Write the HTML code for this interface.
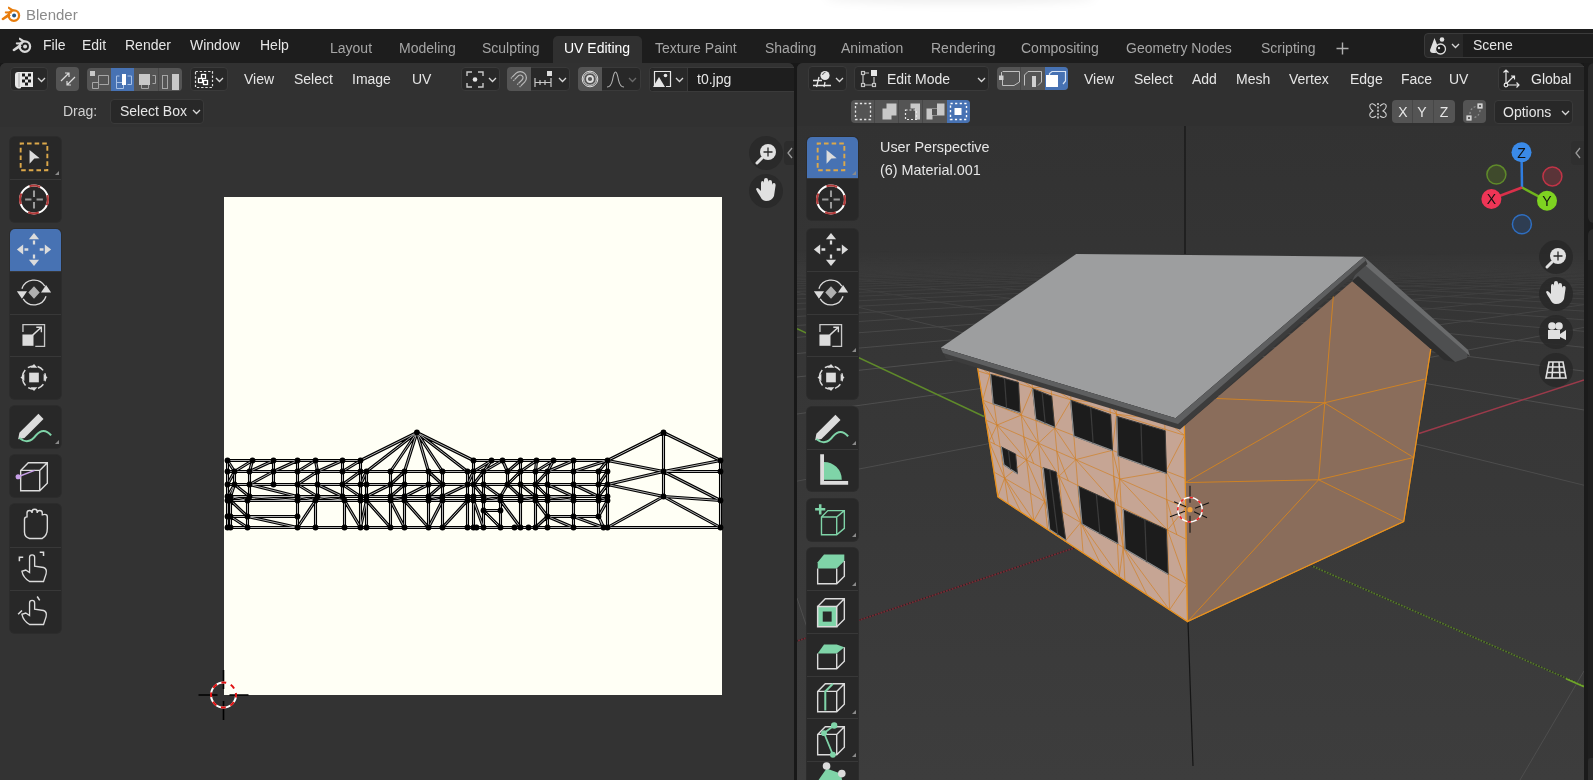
<!DOCTYPE html>
<html><head><meta charset="utf-8">
<style>
*{margin:0;padding:0;box-sizing:border-box}
html,body{width:1593px;height:780px;overflow:hidden;background:#181818;font-family:"Liberation Sans",sans-serif}
.a{position:absolute}
.t{position:absolute;white-space:nowrap;line-height:14px;font-size:14px;color:#e6e6e6;will-change:transform}
.tab{color:#a6a6a6}
.dd{position:absolute;background:#282828;border:1px solid #3a3a3a;border-radius:4px}
.tg{position:absolute;background:#545454;border-radius:4px}
svg{position:absolute;overflow:visible}
</style></head><body>
<!-- title bar -->
<div class="a" style="left:0;top:0;width:1593px;height:29px;background:#ffffff"></div>
<div class="a" style="left:825px;top:-8px;width:270px;height:12px;background:rgba(0,0,0,0.06);border-radius:50%;filter:blur(4px)"></div>
<div class="t" style="left:26px;top:7px;font-size:15px;line-height:15px;color:#8a8a8a">Blender</div>
<svg style="left:0px;top:1px" width="24" height="24" viewBox="0 0 24 24"><g fill="#e87d0d"><path d="M1.6 17.4 L8.6 12.2 L10.8 14.6 L3.2 19.2 Q1.4 19.4 1.6 17.4Z"/><path d="M5 10.4 L12 10.2 L11.6 12.6 L5.6 12.4 Q4.2 11.6 5 10.4Z"/><path d="M8.6 5.6 L14.6 9.2 L12.4 10.8 L8 7.4 Q7.8 5.8 8.6 5.6Z"/></g><circle cx="13.9" cy="14.6" r="5.2" fill="none" stroke="#e87d0d" stroke-width="2.3"/><circle cx="14.1" cy="14.5" r="2" fill="#265787"/></svg>
<!-- top bar -->
<div class="a" style="left:0;top:29px;width:1593px;height:34px;background:#1d1d1d"></div>
<svg style="left:10.5px;top:31.5px" width="24" height="24" viewBox="0 0 24 24"><g fill="#d9d9d9"><path d="M1.6 17.4 L8.6 12.2 L10.8 14.6 L3.2 19.2 Q1.4 19.4 1.6 17.4Z"/><path d="M5 10.4 L12 10.2 L11.6 12.6 L5.6 12.4 Q4.2 11.6 5 10.4Z"/><path d="M8.6 5.6 L14.6 9.2 L12.4 10.8 L8 7.4 Q7.8 5.8 8.6 5.6Z"/></g><circle cx="13.9" cy="14.6" r="5.2" fill="none" stroke="#d9d9d9" stroke-width="2.3"/><circle cx="14.1" cy="14.5" r="2" fill="#d9d9d9"/></svg>
<div class="t" style="left:43px;top:38px">File</div>
<div class="t" style="left:82px;top:38px">Edit</div>
<div class="t" style="left:125px;top:38px">Render</div>
<div class="t" style="left:190px;top:38px">Window</div>
<div class="t" style="left:260px;top:38px">Help</div>
<div class="a" style="left:553px;top:36px;width:89px;height:27px;background:#303030;border-radius:5px 5px 0 0"></div>
<div class="t tab" style="left:330px;top:41px">Layout</div>
<div class="t tab" style="left:399px;top:41px">Modeling</div>
<div class="t tab" style="left:482px;top:41px">Sculpting</div>
<div class="t" style="left:564px;top:41px;color:#ffffff">UV Editing</div>
<div class="t tab" style="left:655px;top:41px">Texture Paint</div>
<div class="t tab" style="left:765px;top:41px">Shading</div>
<div class="t tab" style="left:841px;top:41px">Animation</div>
<div class="t tab" style="left:931px;top:41px">Rendering</div>
<div class="t tab" style="left:1021px;top:41px">Compositing</div>
<div class="t tab" style="left:1126px;top:41px">Geometry Nodes</div>
<div class="t tab" style="left:1261px;top:41px">Scripting</div>
<svg style="left:1336px;top:42px" width="13" height="13"><path d="M6.5 0.5 V12.5 M0.5 6.5 H12.5" stroke="#b0b0b0" stroke-width="1.4"/></svg>

<div class="dd" style="left:1424px;top:33px;width:200px;height:25px;background:#282828"></div>
<div class="a" style="left:1463px;top:34px;width:140px;height:23px;background:#1d1d1d"></div>
<svg style="left:1429px;top:36px" width="22" height="20" viewBox="0 0 22 20"><path d="M5.5 2 L1 14 Q1 17 4 17 H7 Q6 13 9 11 Z" fill="#e0e0e0"/><circle cx="13" cy="3.5" r="2.3" fill="#e0e0e0"/><circle cx="11.5" cy="13" r="5" fill="#1d1d1d" stroke="#e0e0e0" stroke-width="1.3"/><circle cx="10" cy="12" r="1.2" fill="#e0e0e0"/></svg>
<svg style="left:1451px;top:43px" width="9" height="6"><path d="M1 1 L4.5 4.5 L8 1" fill="none" stroke="#d8d8d8" stroke-width="1.3"/></svg>
<div class="t" style="left:1473px;top:38px">Scene</div>

<!-- LEFT EDITOR: UV -->
<div class="a" style="left:0;top:63px;width:794px;height:717px;background:#333333;border-radius:6px 6px 0 0"></div>
<div class="a" style="left:0;top:63px;width:794px;height:64px;background:#313131;border-radius:6px 6px 0 0"></div>

<!-- UV header row1 -->
<div class="dd" style="left:10px;top:67px;width:38px;height:24px"></div>
<svg style="left:14px;top:70px" width="20" height="20" viewBox="0 0 20 20">
 <path d="M4 2 H19 V17 H7 V18 Q5 19 3 18 Q1 17 1 15 V5 Q1 2 4 2Z" fill="#e8e8e8"/>
 <path d="M5 3 V17" stroke="#9a9a9a" stroke-width="0.8"/>
 <g fill="#1a1a1a"><rect x="8" y="3.5" width="3" height="3"/><rect x="14" y="3.5" width="3" height="3"/><rect x="11" y="6.5" width="3" height="3"/><rect x="8" y="9.5" width="3" height="3"/><rect x="14" y="9.5" width="3" height="3"/><rect x="11" y="12.5" width="3" height="3"/></g>
</svg>
<svg style="left:37px;top:77px" width="9" height="6"><path d="M1 1 L4.5 4.5 L8 1" fill="none" stroke="#d8d8d8" stroke-width="1.3"/></svg>
<div class="tg" style="left:56px;top:67px;width:23px;height:24px"></div>
<svg style="left:58px;top:70px" width="20" height="18"><g fill="none" stroke="#dcdcdc" stroke-width="1.2"><path d="M3 11 L11 3 M7 3 H11 V7"/><path d="M17 7 L9 15 M13 15 H9 V11"/></g></svg>
<div class="a" style="left:87px;top:68px;width:95px;height:23px;border-radius:4px;overflow:hidden;background:#545454">
 <div class="a" style="left:24px;top:0;width:23px;height:23px;background:#4772b3"></div>
 <div class="a" style="left:71px;top:0;width:1px;height:23px;background:#474747"></div>
</div>
<svg style="left:89px;top:70px" width="92" height="19">
 <g fill="none" stroke="#a6a6a6" stroke-width="1"><path d="M9.5 5.5 H19.5 V14.5 H10.5 M9.5 5.5 V18.5 H3.5 V12.5 H9.5"/></g>
 <rect x="1" y="1" width="5" height="5" fill="#c8c8c8"/>
 <g fill="none" stroke="#a9c1e6" stroke-width="1"><path d="M30.5 6 H27.5 V18.5 H34.5 V15 M38.5 6 H42.5 V14.5 H38.5 M27.5 12.5 H33"/></g>
 <rect x="33" y="4" width="4" height="11" fill="#ffffff"/>
 <rect x="50" y="4" width="11" height="11" fill="#c8c8c8"/>
 <g fill="none" stroke="#a6a6a6" stroke-width="1"><path d="M63.5 5.5 H66.5 V13.5 H63.5 M52.5 15 V18.5 H59.5 V15"/><rect x="73.5" y="5.5" width="5" height="13"/></g>
 <rect x="83" y="4" width="7" height="16" fill="#c8c8c8"/>
</svg>
<div class="dd" style="left:190px;top:67px;width:38px;height:24px"></div>
<svg style="left:194px;top:70px" width="20" height="20"><rect x="1.5" y="1.5" width="17" height="16" fill="none" stroke="#dcdcdc" stroke-width="1.2" stroke-dasharray="2.4 1.8"/><g fill="#1e1e1e" stroke="#ffffff" stroke-width="1.3"><rect x="7.5" y="4.5" width="4" height="4"/><rect x="4.5" y="8.5" width="4" height="4"/><rect x="9.5" y="10.5" width="4" height="4"/></g></svg>
<svg style="left:215px;top:77px" width="9" height="6"><path d="M1 1 L4.5 4.5 L8 1" fill="none" stroke="#d8d8d8" stroke-width="1.3"/></svg>
<div class="t" style="left:244px;top:72px">View</div>
<div class="t" style="left:294px;top:72px">Select</div>
<div class="t" style="left:352px;top:72px">Image</div>
<div class="t" style="left:412px;top:72px">UV</div>
<div class="dd" style="left:461px;top:67px;width:39px;height:24px"></div>
<svg style="left:465px;top:70px" width="20" height="20"><g fill="none" stroke="#c8c8c8" stroke-width="1.4"><path d="M2 6 V2 H7 M13 2 H18 V6 M18 13 V17 H13 M7 17 H2 V13"/></g><circle cx="10" cy="9.5" r="2.3" fill="#e6e6e6"/></svg>
<svg style="left:488px;top:77px" width="9" height="6"><path d="M1 1 L4.5 4.5 L8 1" fill="none" stroke="#d8d8d8" stroke-width="1.3"/></svg>
<div class="dd" style="left:507px;top:67px;width:63px;height:24px"></div>
<div class="a" style="left:507px;top:67px;width:24px;height:24px;background:#545454;border-radius:4px 0 0 4px"></div>
<svg style="left:507px;top:67px" width="24" height="24" viewBox="-12 -12 24 24"><g transform="translate(0.5 -0.5) rotate(45)"><path d="M-4.5 6 V-1 A4.5 4.5 0 0 1 4.5 -1 V6" fill="none" stroke="#b8b8b8" stroke-width="4.6"/><path d="M-4.5 6.5 V-1 A4.5 4.5 0 0 1 4.5 -1 V6.5" fill="none" stroke="#545454" stroke-width="2.2"/><path d="M-7 4.5 H-2 M2 4.5 H7" stroke="#545454" stroke-width="0.8"/></g></svg>
<svg style="left:533px;top:70px" width="22" height="20"><rect x="14" y="1" width="5" height="5" fill="#dcdcdc"/><g fill="none" stroke="#c8c8c8" stroke-width="1.2"><path d="M2 8 V17 M18 8 V17 M2 12.5 H18 M7 10 V15 M12 10 V15"/></g></svg>
<svg style="left:558px;top:77px" width="9" height="6"><path d="M1 1 L4.5 4.5 L8 1" fill="none" stroke="#d8d8d8" stroke-width="1.3"/></svg>
<div class="dd" style="left:578px;top:67px;width:63px;height:24px"></div>
<div class="a" style="left:578px;top:67px;width:24px;height:24px;background:#545454;border-radius:4px 0 0 4px"></div>
<svg style="left:580px;top:69px" width="20" height="20"><g fill="none" stroke="#dcdcdc" stroke-width="1"><circle cx="10" cy="10" r="7.8"/><circle cx="10" cy="10" r="6.3"/></g><circle cx="10" cy="10" r="3" fill="none" stroke="#dcdcdc" stroke-width="1.8"/></svg>
<svg style="left:605px;top:70px" width="20" height="20"><path d="M2 17 Q6 17 7.5 10 Q9 2 10.5 2 Q12 2 13.5 10 Q15 17 19 17" fill="none" stroke="#b4b4b4" stroke-width="1.1"/></svg>
<svg style="left:628px;top:77px" width="9" height="6"><path d="M1 1 L4.5 4.5 L8 1" fill="none" stroke="#6a6a6a" stroke-width="1.3"/></svg>
<div class="dd" style="left:649px;top:67px;width:145px;height:25px;background:#1e1e1e;border-right:none;border-radius:4px 0 0 4px"></div>
<div class="a" style="left:650px;top:68px;width:38px;height:23px;background:#282828;border-right:1px solid #3a3a3a;border-radius:4px 0 0 4px"></div>
<svg style="left:653px;top:70px" width="20" height="19"><path d="M1.5 16.5 V1.5 H17.5 V16.5 H13" fill="none" stroke="#e6e6e6" stroke-width="1.2"/><path d="M0 17 L6 7 L12 17Z" fill="#e6e6e6"/><circle cx="12.5" cy="5.5" r="1.8" fill="#e6e6e6"/></svg>
<svg style="left:675px;top:77px" width="9" height="6"><path d="M1 1 L4.5 4.5 L8 1" fill="none" stroke="#d8d8d8" stroke-width="1.3"/></svg>
<div class="t" style="left:697px;top:72px">t0.jpg</div>
<!-- UV row2 -->
<div class="t" style="left:63px;top:104px;color:#d0d0d0">Drag:</div>
<div class="dd" style="left:110px;top:99px;width:94px;height:25px"></div>
<div class="t" style="left:120px;top:104px">Select Box</div>
<svg style="left:192px;top:109px" width="9" height="6"><path d="M1 1 L4.5 4.5 L8 1" fill="none" stroke="#d8d8d8" stroke-width="1.3"/></svg>
<!--UVHEADER-->
<div class="a" style="left:224px;top:197px;width:498px;height:498px;background:#fffff5"></div>
<svg style="left:0;top:0" width="1593" height="780"><path d="M227.5 460.5L252.5 460.5M252.5 460.5L273.5 460.5M273.5 460.5L297.5 460.5M297.5 460.5L315.5 460.5M315.5 460.5L342.5 460.5M342.5 460.5L360.5 460.5M473.5 460.5L491.5 460.5M491.5 460.5L502.5 460.5M502.5 460.5L520.5 460.5M520.5 460.5L536.5 460.5M536.5 460.5L553.5 460.5M553.5 460.5L573.5 460.5M573.5 460.5L607.5 460.5M227.5 471.5L234.5 471.5M234.5 471.5L249.5 471.5M249.5 471.5L273.5 471.5M273.5 471.5L297.5 471.5M297.5 471.5L317.5 471.5M317.5 471.5L342.5 471.5M342.5 471.5L360.5 471.5M360.5 471.5L366.5 471.5M366.5 471.5L390.5 471.5M390.5 471.5L404.5 471.5M404.5 471.5L428.5 471.5M428.5 471.5L442.5 471.5M442.5 471.5L467.5 471.5M467.5 471.5L473.5 471.5M473.5 471.5L483.5 471.5M483.5 471.5L507.5 471.5M507.5 471.5L520.5 471.5M520.5 471.5L535.5 471.5M535.5 471.5L547.5 471.5M547.5 471.5L573.5 471.5M573.5 471.5L598.5 471.5M598.5 471.5L607.5 471.5M227.5 484.5L234.5 484.5M234.5 484.5L249.5 484.5M249.5 484.5L273.5 484.5M273.5 484.5L297.5 484.5M297.5 484.5L317.5 484.5M317.5 484.5L342.5 484.5M342.5 484.5L360.5 484.5M360.5 484.5L366.5 484.5M366.5 484.5L390.5 484.5M390.5 484.5L404.5 484.5M404.5 484.5L428.5 484.5M428.5 484.5L442.5 484.5M442.5 484.5L467.5 484.5M467.5 484.5L473.5 484.5M473.5 484.5L483.5 484.5M483.5 484.5L507.5 484.5M507.5 484.5L520.5 484.5M520.5 484.5L535.5 484.5M535.5 484.5L547.5 484.5M547.5 484.5L573.5 484.5M573.5 484.5L598.5 484.5M598.5 484.5L607.5 484.5M227.5 496.5L230.5 496.5M230.5 496.5L249.5 496.5M249.5 496.5L297.5 496.5M297.5 496.5L317.5 496.5M317.5 496.5L342.5 496.5M342.5 496.5L360.5 496.5M360.5 496.5L366.5 496.5M366.5 496.5L390.5 496.5M390.5 496.5L404.5 496.5M404.5 496.5L428.5 496.5M428.5 496.5L442.5 496.5M442.5 496.5L467.5 496.5M467.5 496.5L473.5 496.5M473.5 496.5L483.5 496.5M483.5 496.5L500.5 496.5M500.5 496.5L520.5 496.5M520.5 496.5L535.5 496.5M535.5 496.5L547.5 496.5M547.5 496.5L573.5 496.5M573.5 496.5L598.5 496.5M598.5 496.5L607.5 496.5M227.5 500.5L230.5 500.5M230.5 500.5L247.5 500.5M247.5 500.5L297.5 500.5M297.5 500.5L315.5 500.5M315.5 500.5L344.5 500.5M344.5 500.5L360.5 500.5M360.5 500.5L366.5 500.5M366.5 500.5L390.5 500.5M390.5 500.5L404.5 500.5M404.5 500.5L428.5 500.5M428.5 500.5L442.5 500.5M442.5 500.5L467.5 500.5M467.5 500.5L473.5 500.5M473.5 500.5L483.5 500.5M483.5 500.5L500.5 500.5M500.5 500.5L520.5 500.5M520.5 500.5L535.5 500.5M535.5 500.5L547.5 500.5M547.5 500.5L573.5 500.5M573.5 500.5L598.5 500.5M598.5 500.5L607.5 500.5M227.5 516.5L230.5 516.5M230.5 516.5L247.5 516.5M247.5 516.5L297.5 516.5M483.5 510.5L500.5 510.5M547.5 516.5L573.5 516.5M573.5 516.5L598.5 516.5M227.5 527.5L230.5 527.5M230.5 527.5L247.5 527.5M247.5 527.5L297.5 527.5M297.5 527.5L315.5 527.5M315.5 527.5L344.5 527.5M344.5 527.5L360.5 527.5M360.5 527.5L366.5 527.5M366.5 527.5L390.5 527.5M390.5 527.5L404.5 527.5M404.5 527.5L428.5 527.5M428.5 527.5L442.5 527.5M442.5 527.5L467.5 527.5M467.5 527.5L473.5 527.5M473.5 527.5L476.5 527.5M476.5 527.5L483.5 527.5M483.5 527.5L500.5 527.5M500.5 527.5L514.5 527.5M514.5 527.5L520.5 527.5M520.5 527.5L528.5 527.5M528.5 527.5L535.5 527.5M535.5 527.5L547.5 527.5M547.5 527.5L573.5 527.5M573.5 527.5L603.5 527.5M603.5 527.5L607.5 527.5M227.5 460.5L227.5 471.5M227.5 471.5L227.5 484.5M227.5 484.5L227.5 496.5M227.5 496.5L227.5 500.5M227.5 500.5L227.5 516.5M227.5 516.5L227.5 527.5M230.5 496.5L230.5 500.5M230.5 500.5L230.5 516.5M230.5 516.5L230.5 527.5M234.5 471.5L234.5 484.5M249.5 471.5L249.5 484.5M249.5 484.5L249.5 496.5M247.5 500.5L247.5 516.5M247.5 516.5L247.5 527.5M273.5 460.5L273.5 471.5M273.5 471.5L273.5 484.5M297.5 460.5L297.5 471.5M297.5 471.5L297.5 484.5M297.5 484.5L297.5 496.5M297.5 496.5L297.5 500.5M297.5 500.5L297.5 516.5M297.5 516.5L297.5 527.5M317.5 471.5L317.5 484.5M317.5 484.5L317.5 496.5M315.5 500.5L315.5 527.5M342.5 460.5L342.5 471.5M342.5 471.5L342.5 484.5M342.5 484.5L342.5 496.5M344.5 500.5L344.5 527.5M360.5 460.5L360.5 471.5M360.5 471.5L360.5 484.5M360.5 484.5L360.5 496.5M360.5 496.5L360.5 500.5M360.5 500.5L360.5 527.5M366.5 471.5L366.5 484.5M366.5 484.5L366.5 496.5M366.5 496.5L366.5 500.5M366.5 500.5L366.5 527.5M390.5 471.5L390.5 484.5M390.5 484.5L390.5 496.5M390.5 496.5L390.5 500.5M390.5 500.5L390.5 527.5M404.5 471.5L404.5 484.5M404.5 484.5L404.5 496.5M404.5 496.5L404.5 500.5M404.5 500.5L404.5 527.5M428.5 471.5L428.5 484.5M428.5 484.5L428.5 496.5M428.5 496.5L428.5 500.5M428.5 500.5L428.5 527.5M442.5 471.5L442.5 484.5M442.5 484.5L442.5 496.5M442.5 496.5L442.5 500.5M442.5 500.5L442.5 527.5M467.5 471.5L467.5 484.5M467.5 484.5L467.5 496.5M467.5 496.5L467.5 500.5M467.5 500.5L467.5 527.5M473.5 460.5L473.5 471.5M473.5 471.5L473.5 484.5M473.5 484.5L473.5 496.5M473.5 496.5L473.5 500.5M473.5 500.5L473.5 527.5M483.5 471.5L483.5 484.5M483.5 484.5L483.5 496.5M483.5 496.5L483.5 500.5M483.5 500.5L483.5 510.5M483.5 510.5L483.5 527.5M500.5 496.5L500.5 500.5M500.5 500.5L500.5 510.5M500.5 510.5L500.5 527.5M507.5 471.5L507.5 484.5M520.5 460.5L520.5 471.5M520.5 471.5L520.5 484.5M520.5 484.5L520.5 496.5M520.5 496.5L520.5 500.5M520.5 500.5L520.5 527.5M535.5 471.5L535.5 484.5M535.5 484.5L535.5 496.5M535.5 496.5L535.5 500.5M535.5 500.5L535.5 527.5M547.5 471.5L547.5 484.5M547.5 484.5L547.5 496.5M547.5 496.5L547.5 500.5M547.5 500.5L547.5 516.5M547.5 516.5L547.5 527.5M573.5 460.5L573.5 471.5M573.5 471.5L573.5 484.5M573.5 484.5L573.5 496.5M573.5 496.5L573.5 500.5M573.5 500.5L573.5 516.5M573.5 516.5L573.5 527.5M598.5 471.5L598.5 484.5M598.5 484.5L598.5 496.5M598.5 496.5L598.5 500.5M598.5 500.5L598.5 516.5M607.5 460.5L607.5 471.5M607.5 471.5L607.5 484.5M607.5 484.5L607.5 496.5M607.5 496.5L607.5 500.5M607.5 500.5L607.5 527.5M598.5 516.5L603.5 527.5M227.5 460.5L234.5 471.5M234.5 471.5L252.5 460.5M249.5 471.5L252.5 460.5M249.5 471.5L273.5 460.5M273.5 471.5L297.5 460.5M227.5 484.5L234.5 471.5M249.5 484.5L273.5 471.5M234.5 484.5L227.5 496.5M234.5 484.5L230.5 496.5M234.5 484.5L249.5 496.5M249.5 484.5L297.5 496.5M230.5 500.5L247.5 516.5M230.5 516.5L247.5 527.5M247.5 516.5L297.5 527.5M297.5 471.5L315.5 460.5M315.5 460.5L317.5 471.5M317.5 471.5L342.5 460.5M342.5 471.5L360.5 460.5M297.5 484.5L317.5 471.5M342.5 484.5L360.5 471.5M297.5 484.5L317.5 496.5M317.5 484.5L342.5 496.5M342.5 484.5L360.5 496.5M360.5 484.5L366.5 471.5M297.5 527.5L315.5 500.5M344.5 500.5L360.5 527.5M360.5 527.5L366.5 500.5M390.5 484.5L404.5 471.5M428.5 471.5L442.5 484.5M366.5 496.5L390.5 484.5M390.5 496.5L404.5 484.5M404.5 496.5L428.5 484.5M428.5 496.5L442.5 484.5M366.5 500.5L390.5 527.5M390.5 500.5L404.5 527.5M404.5 500.5L428.5 527.5M428.5 527.5L442.5 500.5M473.5 471.5L491.5 460.5M483.5 471.5L491.5 460.5M483.5 471.5L502.5 460.5M502.5 460.5L507.5 471.5M467.5 484.5L473.5 471.5M473.5 484.5L483.5 471.5M442.5 496.5L467.5 484.5M473.5 484.5L483.5 496.5M483.5 484.5L500.5 496.5M500.5 496.5L507.5 484.5M442.5 527.5L467.5 500.5M473.5 500.5L483.5 527.5M483.5 510.5L500.5 527.5M500.5 500.5L520.5 527.5M507.5 471.5L520.5 460.5M520.5 471.5L536.5 460.5M535.5 471.5L553.5 460.5M547.5 471.5L553.5 460.5M547.5 471.5L573.5 460.5M507.5 484.5L520.5 471.5M535.5 484.5L547.5 471.5M507.5 484.5L520.5 496.5M520.5 484.5L535.5 496.5M535.5 484.5L547.5 496.5M547.5 484.5L573.5 496.5M535.5 500.5L547.5 516.5M547.5 516.5L535.5 527.5M547.5 516.5L573.5 527.5M573.5 471.5L607.5 460.5M598.5 471.5L607.5 460.5M598.5 484.5L607.5 471.5M573.5 484.5L598.5 496.5M598.5 496.5L607.5 484.5M598.5 516.5L607.5 500.5M573.5 516.5L603.5 527.5M598.5 516.5L603.5 527.5M536.5 460.5L535.5 471.5M230.5 496.5L247.5 500.5M249.5 496.5L297.5 500.5M297.5 496.5L315.5 500.5M317.5 496.5L344.5 500.5M360.5 496.5L366.5 500.5M390.5 496.5L404.5 500.5M428.5 496.5L442.5 500.5M467.5 496.5L473.5 500.5M483.5 496.5L500.5 500.5M520.5 496.5L535.5 500.5M547.5 496.5L573.5 500.5M598.5 496.5L607.5 500.5M416.9 432.5L360.5 460.5M416.9 432.5L366.5 471.5M416.9 432.5L390.5 471.5M416.9 432.5L404.5 471.5M416.9 432.5L428.5 471.5M416.9 432.5L442.5 471.5M416.9 432.5L467.5 471.5M416.9 432.5L473.5 460.5M607.5 460.5L663.5 432.5M663.5 432.5L720.5 460.5M663.5 432.5L663.5 471.5M663.5 471.5L663.5 496.5M607.5 460.5L663.5 471.5M663.5 471.5L720.5 460.5M607.5 484.5L663.5 471.5M607.5 484.5L663.5 496.5M663.5 471.5L720.5 471.5M663.5 471.5L720.5 500.5M663.5 496.5L720.5 500.5M607.5 527.5L663.5 496.5M663.5 496.5L720.5 527.5M607.5 527.5L720.5 527.5M720.5 460.5L720.5 527.5" stroke="#000" stroke-width="3.1" fill="none"/><path d="M227.5 460.5L252.5 460.5M252.5 460.5L273.5 460.5M273.5 460.5L297.5 460.5M297.5 460.5L315.5 460.5M315.5 460.5L342.5 460.5M342.5 460.5L360.5 460.5M473.5 460.5L491.5 460.5M491.5 460.5L502.5 460.5M502.5 460.5L520.5 460.5M520.5 460.5L536.5 460.5M536.5 460.5L553.5 460.5M553.5 460.5L573.5 460.5M573.5 460.5L607.5 460.5M227.5 471.5L234.5 471.5M234.5 471.5L249.5 471.5M249.5 471.5L273.5 471.5M273.5 471.5L297.5 471.5M297.5 471.5L317.5 471.5M317.5 471.5L342.5 471.5M342.5 471.5L360.5 471.5M360.5 471.5L366.5 471.5M366.5 471.5L390.5 471.5M390.5 471.5L404.5 471.5M404.5 471.5L428.5 471.5M428.5 471.5L442.5 471.5M442.5 471.5L467.5 471.5M467.5 471.5L473.5 471.5M473.5 471.5L483.5 471.5M483.5 471.5L507.5 471.5M507.5 471.5L520.5 471.5M520.5 471.5L535.5 471.5M535.5 471.5L547.5 471.5M547.5 471.5L573.5 471.5M573.5 471.5L598.5 471.5M598.5 471.5L607.5 471.5M227.5 484.5L234.5 484.5M234.5 484.5L249.5 484.5M249.5 484.5L273.5 484.5M273.5 484.5L297.5 484.5M297.5 484.5L317.5 484.5M317.5 484.5L342.5 484.5M342.5 484.5L360.5 484.5M360.5 484.5L366.5 484.5M366.5 484.5L390.5 484.5M390.5 484.5L404.5 484.5M404.5 484.5L428.5 484.5M428.5 484.5L442.5 484.5M442.5 484.5L467.5 484.5M467.5 484.5L473.5 484.5M473.5 484.5L483.5 484.5M483.5 484.5L507.5 484.5M507.5 484.5L520.5 484.5M520.5 484.5L535.5 484.5M535.5 484.5L547.5 484.5M547.5 484.5L573.5 484.5M573.5 484.5L598.5 484.5M598.5 484.5L607.5 484.5M227.5 496.5L230.5 496.5M230.5 496.5L249.5 496.5M249.5 496.5L297.5 496.5M297.5 496.5L317.5 496.5M317.5 496.5L342.5 496.5M342.5 496.5L360.5 496.5M360.5 496.5L366.5 496.5M366.5 496.5L390.5 496.5M390.5 496.5L404.5 496.5M404.5 496.5L428.5 496.5M428.5 496.5L442.5 496.5M442.5 496.5L467.5 496.5M467.5 496.5L473.5 496.5M473.5 496.5L483.5 496.5M483.5 496.5L500.5 496.5M500.5 496.5L520.5 496.5M520.5 496.5L535.5 496.5M535.5 496.5L547.5 496.5M547.5 496.5L573.5 496.5M573.5 496.5L598.5 496.5M598.5 496.5L607.5 496.5M227.5 500.5L230.5 500.5M230.5 500.5L247.5 500.5M247.5 500.5L297.5 500.5M297.5 500.5L315.5 500.5M315.5 500.5L344.5 500.5M344.5 500.5L360.5 500.5M360.5 500.5L366.5 500.5M366.5 500.5L390.5 500.5M390.5 500.5L404.5 500.5M404.5 500.5L428.5 500.5M428.5 500.5L442.5 500.5M442.5 500.5L467.5 500.5M467.5 500.5L473.5 500.5M473.5 500.5L483.5 500.5M483.5 500.5L500.5 500.5M500.5 500.5L520.5 500.5M520.5 500.5L535.5 500.5M535.5 500.5L547.5 500.5M547.5 500.5L573.5 500.5M573.5 500.5L598.5 500.5M598.5 500.5L607.5 500.5M227.5 516.5L230.5 516.5M230.5 516.5L247.5 516.5M247.5 516.5L297.5 516.5M483.5 510.5L500.5 510.5M547.5 516.5L573.5 516.5M573.5 516.5L598.5 516.5M227.5 527.5L230.5 527.5M230.5 527.5L247.5 527.5M247.5 527.5L297.5 527.5M297.5 527.5L315.5 527.5M315.5 527.5L344.5 527.5M344.5 527.5L360.5 527.5M360.5 527.5L366.5 527.5M366.5 527.5L390.5 527.5M390.5 527.5L404.5 527.5M404.5 527.5L428.5 527.5M428.5 527.5L442.5 527.5M442.5 527.5L467.5 527.5M467.5 527.5L473.5 527.5M473.5 527.5L476.5 527.5M476.5 527.5L483.5 527.5M483.5 527.5L500.5 527.5M500.5 527.5L514.5 527.5M514.5 527.5L520.5 527.5M520.5 527.5L528.5 527.5M528.5 527.5L535.5 527.5M535.5 527.5L547.5 527.5M547.5 527.5L573.5 527.5M573.5 527.5L603.5 527.5M603.5 527.5L607.5 527.5M227.5 460.5L227.5 471.5M227.5 471.5L227.5 484.5M227.5 484.5L227.5 496.5M227.5 496.5L227.5 500.5M227.5 500.5L227.5 516.5M227.5 516.5L227.5 527.5M230.5 496.5L230.5 500.5M230.5 500.5L230.5 516.5M230.5 516.5L230.5 527.5M234.5 471.5L234.5 484.5M249.5 471.5L249.5 484.5M249.5 484.5L249.5 496.5M247.5 500.5L247.5 516.5M247.5 516.5L247.5 527.5M273.5 460.5L273.5 471.5M273.5 471.5L273.5 484.5M297.5 460.5L297.5 471.5M297.5 471.5L297.5 484.5M297.5 484.5L297.5 496.5M297.5 496.5L297.5 500.5M297.5 500.5L297.5 516.5M297.5 516.5L297.5 527.5M317.5 471.5L317.5 484.5M317.5 484.5L317.5 496.5M315.5 500.5L315.5 527.5M342.5 460.5L342.5 471.5M342.5 471.5L342.5 484.5M342.5 484.5L342.5 496.5M344.5 500.5L344.5 527.5M360.5 460.5L360.5 471.5M360.5 471.5L360.5 484.5M360.5 484.5L360.5 496.5M360.5 496.5L360.5 500.5M360.5 500.5L360.5 527.5M366.5 471.5L366.5 484.5M366.5 484.5L366.5 496.5M366.5 496.5L366.5 500.5M366.5 500.5L366.5 527.5M390.5 471.5L390.5 484.5M390.5 484.5L390.5 496.5M390.5 496.5L390.5 500.5M390.5 500.5L390.5 527.5M404.5 471.5L404.5 484.5M404.5 484.5L404.5 496.5M404.5 496.5L404.5 500.5M404.5 500.5L404.5 527.5M428.5 471.5L428.5 484.5M428.5 484.5L428.5 496.5M428.5 496.5L428.5 500.5M428.5 500.5L428.5 527.5M442.5 471.5L442.5 484.5M442.5 484.5L442.5 496.5M442.5 496.5L442.5 500.5M442.5 500.5L442.5 527.5M467.5 471.5L467.5 484.5M467.5 484.5L467.5 496.5M467.5 496.5L467.5 500.5M467.5 500.5L467.5 527.5M473.5 460.5L473.5 471.5M473.5 471.5L473.5 484.5M473.5 484.5L473.5 496.5M473.5 496.5L473.5 500.5M473.5 500.5L473.5 527.5M483.5 471.5L483.5 484.5M483.5 484.5L483.5 496.5M483.5 496.5L483.5 500.5M483.5 500.5L483.5 510.5M483.5 510.5L483.5 527.5M500.5 496.5L500.5 500.5M500.5 500.5L500.5 510.5M500.5 510.5L500.5 527.5M507.5 471.5L507.5 484.5M520.5 460.5L520.5 471.5M520.5 471.5L520.5 484.5M520.5 484.5L520.5 496.5M520.5 496.5L520.5 500.5M520.5 500.5L520.5 527.5M535.5 471.5L535.5 484.5M535.5 484.5L535.5 496.5M535.5 496.5L535.5 500.5M535.5 500.5L535.5 527.5M547.5 471.5L547.5 484.5M547.5 484.5L547.5 496.5M547.5 496.5L547.5 500.5M547.5 500.5L547.5 516.5M547.5 516.5L547.5 527.5M573.5 460.5L573.5 471.5M573.5 471.5L573.5 484.5M573.5 484.5L573.5 496.5M573.5 496.5L573.5 500.5M573.5 500.5L573.5 516.5M573.5 516.5L573.5 527.5M598.5 471.5L598.5 484.5M598.5 484.5L598.5 496.5M598.5 496.5L598.5 500.5M598.5 500.5L598.5 516.5M607.5 460.5L607.5 471.5M607.5 471.5L607.5 484.5M607.5 484.5L607.5 496.5M607.5 496.5L607.5 500.5M607.5 500.5L607.5 527.5M598.5 516.5L603.5 527.5M227.5 460.5L234.5 471.5M234.5 471.5L252.5 460.5M249.5 471.5L252.5 460.5M249.5 471.5L273.5 460.5M273.5 471.5L297.5 460.5M227.5 484.5L234.5 471.5M249.5 484.5L273.5 471.5M234.5 484.5L227.5 496.5M234.5 484.5L230.5 496.5M234.5 484.5L249.5 496.5M249.5 484.5L297.5 496.5M230.5 500.5L247.5 516.5M230.5 516.5L247.5 527.5M247.5 516.5L297.5 527.5M297.5 471.5L315.5 460.5M315.5 460.5L317.5 471.5M317.5 471.5L342.5 460.5M342.5 471.5L360.5 460.5M297.5 484.5L317.5 471.5M342.5 484.5L360.5 471.5M297.5 484.5L317.5 496.5M317.5 484.5L342.5 496.5M342.5 484.5L360.5 496.5M360.5 484.5L366.5 471.5M297.5 527.5L315.5 500.5M344.5 500.5L360.5 527.5M360.5 527.5L366.5 500.5M390.5 484.5L404.5 471.5M428.5 471.5L442.5 484.5M366.5 496.5L390.5 484.5M390.5 496.5L404.5 484.5M404.5 496.5L428.5 484.5M428.5 496.5L442.5 484.5M366.5 500.5L390.5 527.5M390.5 500.5L404.5 527.5M404.5 500.5L428.5 527.5M428.5 527.5L442.5 500.5M473.5 471.5L491.5 460.5M483.5 471.5L491.5 460.5M483.5 471.5L502.5 460.5M502.5 460.5L507.5 471.5M467.5 484.5L473.5 471.5M473.5 484.5L483.5 471.5M442.5 496.5L467.5 484.5M473.5 484.5L483.5 496.5M483.5 484.5L500.5 496.5M500.5 496.5L507.5 484.5M442.5 527.5L467.5 500.5M473.5 500.5L483.5 527.5M483.5 510.5L500.5 527.5M500.5 500.5L520.5 527.5M507.5 471.5L520.5 460.5M520.5 471.5L536.5 460.5M535.5 471.5L553.5 460.5M547.5 471.5L553.5 460.5M547.5 471.5L573.5 460.5M507.5 484.5L520.5 471.5M535.5 484.5L547.5 471.5M507.5 484.5L520.5 496.5M520.5 484.5L535.5 496.5M535.5 484.5L547.5 496.5M547.5 484.5L573.5 496.5M535.5 500.5L547.5 516.5M547.5 516.5L535.5 527.5M547.5 516.5L573.5 527.5M573.5 471.5L607.5 460.5M598.5 471.5L607.5 460.5M598.5 484.5L607.5 471.5M573.5 484.5L598.5 496.5M598.5 496.5L607.5 484.5M598.5 516.5L607.5 500.5M573.5 516.5L603.5 527.5M598.5 516.5L603.5 527.5M536.5 460.5L535.5 471.5M230.5 496.5L247.5 500.5M249.5 496.5L297.5 500.5M297.5 496.5L315.5 500.5M317.5 496.5L344.5 500.5M360.5 496.5L366.5 500.5M390.5 496.5L404.5 500.5M428.5 496.5L442.5 500.5M467.5 496.5L473.5 500.5M483.5 496.5L500.5 500.5M520.5 496.5L535.5 500.5M547.5 496.5L573.5 500.5M598.5 496.5L607.5 500.5M416.9 432.5L360.5 460.5M416.9 432.5L366.5 471.5M416.9 432.5L390.5 471.5M416.9 432.5L404.5 471.5M416.9 432.5L428.5 471.5M416.9 432.5L442.5 471.5M416.9 432.5L467.5 471.5M416.9 432.5L473.5 460.5M607.5 460.5L663.5 432.5M663.5 432.5L720.5 460.5M663.5 432.5L663.5 471.5M663.5 471.5L663.5 496.5M607.5 460.5L663.5 471.5M663.5 471.5L720.5 460.5M607.5 484.5L663.5 471.5M607.5 484.5L663.5 496.5M663.5 471.5L720.5 471.5M663.5 471.5L720.5 500.5M663.5 496.5L720.5 500.5M607.5 527.5L663.5 496.5M663.5 496.5L720.5 527.5M607.5 527.5L720.5 527.5M720.5 460.5L720.5 527.5" stroke="#b0b0b0" stroke-width="1" fill="none"/><g fill="#000"><circle cx="227.5" cy="460.5" r="2.9"/><circle cx="227.5" cy="471.5" r="2.9"/><circle cx="227.5" cy="484.5" r="2.9"/><circle cx="227.5" cy="496.5" r="2.9"/><circle cx="227.5" cy="500.5" r="2.9"/><circle cx="227.5" cy="516.5" r="2.9"/><circle cx="227.5" cy="527.5" r="2.9"/><circle cx="230.5" cy="496.5" r="2.9"/><circle cx="230.5" cy="500.5" r="2.9"/><circle cx="230.5" cy="516.5" r="2.9"/><circle cx="230.5" cy="527.5" r="2.9"/><circle cx="234.5" cy="471.5" r="2.9"/><circle cx="234.5" cy="484.5" r="2.9"/><circle cx="247.5" cy="500.5" r="2.9"/><circle cx="247.5" cy="516.5" r="2.9"/><circle cx="247.5" cy="527.5" r="2.9"/><circle cx="249.5" cy="471.5" r="2.9"/><circle cx="249.5" cy="484.5" r="2.9"/><circle cx="249.5" cy="496.5" r="2.9"/><circle cx="252.5" cy="460.5" r="2.9"/><circle cx="273.5" cy="460.5" r="2.9"/><circle cx="273.5" cy="471.5" r="2.9"/><circle cx="273.5" cy="484.5" r="2.9"/><circle cx="297.5" cy="460.5" r="2.9"/><circle cx="297.5" cy="471.5" r="2.9"/><circle cx="297.5" cy="484.5" r="2.9"/><circle cx="297.5" cy="496.5" r="2.9"/><circle cx="297.5" cy="500.5" r="2.9"/><circle cx="297.5" cy="516.5" r="2.9"/><circle cx="297.5" cy="527.5" r="2.9"/><circle cx="315.5" cy="460.5" r="2.9"/><circle cx="315.5" cy="500.5" r="2.9"/><circle cx="315.5" cy="527.5" r="2.9"/><circle cx="317.5" cy="471.5" r="2.9"/><circle cx="317.5" cy="484.5" r="2.9"/><circle cx="317.5" cy="496.5" r="2.9"/><circle cx="342.5" cy="460.5" r="2.9"/><circle cx="342.5" cy="471.5" r="2.9"/><circle cx="342.5" cy="484.5" r="2.9"/><circle cx="342.5" cy="496.5" r="2.9"/><circle cx="344.5" cy="500.5" r="2.9"/><circle cx="344.5" cy="527.5" r="2.9"/><circle cx="360.5" cy="460.5" r="2.9"/><circle cx="360.5" cy="471.5" r="2.9"/><circle cx="360.5" cy="484.5" r="2.9"/><circle cx="360.5" cy="496.5" r="2.9"/><circle cx="360.5" cy="500.5" r="2.9"/><circle cx="360.5" cy="527.5" r="2.9"/><circle cx="366.5" cy="471.5" r="2.9"/><circle cx="366.5" cy="484.5" r="2.9"/><circle cx="366.5" cy="496.5" r="2.9"/><circle cx="366.5" cy="500.5" r="2.9"/><circle cx="366.5" cy="527.5" r="2.9"/><circle cx="390.5" cy="471.5" r="2.9"/><circle cx="390.5" cy="484.5" r="2.9"/><circle cx="390.5" cy="496.5" r="2.9"/><circle cx="390.5" cy="500.5" r="2.9"/><circle cx="390.5" cy="527.5" r="2.9"/><circle cx="404.5" cy="471.5" r="2.9"/><circle cx="404.5" cy="484.5" r="2.9"/><circle cx="404.5" cy="496.5" r="2.9"/><circle cx="404.5" cy="500.5" r="2.9"/><circle cx="404.5" cy="527.5" r="2.9"/><circle cx="416.9" cy="432.5" r="2.9"/><circle cx="428.5" cy="471.5" r="2.9"/><circle cx="428.5" cy="484.5" r="2.9"/><circle cx="428.5" cy="496.5" r="2.9"/><circle cx="428.5" cy="500.5" r="2.9"/><circle cx="428.5" cy="527.5" r="2.9"/><circle cx="442.5" cy="471.5" r="2.9"/><circle cx="442.5" cy="484.5" r="2.9"/><circle cx="442.5" cy="496.5" r="2.9"/><circle cx="442.5" cy="500.5" r="2.9"/><circle cx="442.5" cy="527.5" r="2.9"/><circle cx="467.5" cy="471.5" r="2.9"/><circle cx="467.5" cy="484.5" r="2.9"/><circle cx="467.5" cy="496.5" r="2.9"/><circle cx="467.5" cy="500.5" r="2.9"/><circle cx="467.5" cy="527.5" r="2.9"/><circle cx="473.5" cy="460.5" r="2.9"/><circle cx="473.5" cy="471.5" r="2.9"/><circle cx="473.5" cy="484.5" r="2.9"/><circle cx="473.5" cy="496.5" r="2.9"/><circle cx="473.5" cy="500.5" r="2.9"/><circle cx="473.5" cy="527.5" r="2.9"/><circle cx="476.5" cy="527.5" r="2.9"/><circle cx="483.5" cy="471.5" r="2.9"/><circle cx="483.5" cy="484.5" r="2.9"/><circle cx="483.5" cy="496.5" r="2.9"/><circle cx="483.5" cy="500.5" r="2.9"/><circle cx="483.5" cy="510.5" r="2.9"/><circle cx="483.5" cy="527.5" r="2.9"/><circle cx="491.5" cy="460.5" r="2.9"/><circle cx="500.5" cy="496.5" r="2.9"/><circle cx="500.5" cy="500.5" r="2.9"/><circle cx="500.5" cy="510.5" r="2.9"/><circle cx="500.5" cy="527.5" r="2.9"/><circle cx="502.5" cy="460.5" r="2.9"/><circle cx="507.5" cy="471.5" r="2.9"/><circle cx="507.5" cy="484.5" r="2.9"/><circle cx="514.5" cy="527.5" r="2.9"/><circle cx="520.5" cy="460.5" r="2.9"/><circle cx="520.5" cy="471.5" r="2.9"/><circle cx="520.5" cy="484.5" r="2.9"/><circle cx="520.5" cy="496.5" r="2.9"/><circle cx="520.5" cy="500.5" r="2.9"/><circle cx="520.5" cy="527.5" r="2.9"/><circle cx="528.5" cy="527.5" r="2.9"/><circle cx="535.5" cy="471.5" r="2.9"/><circle cx="535.5" cy="484.5" r="2.9"/><circle cx="535.5" cy="496.5" r="2.9"/><circle cx="535.5" cy="500.5" r="2.9"/><circle cx="535.5" cy="527.5" r="2.9"/><circle cx="536.5" cy="460.5" r="2.9"/><circle cx="547.5" cy="471.5" r="2.9"/><circle cx="547.5" cy="484.5" r="2.9"/><circle cx="547.5" cy="496.5" r="2.9"/><circle cx="547.5" cy="500.5" r="2.9"/><circle cx="547.5" cy="516.5" r="2.9"/><circle cx="547.5" cy="527.5" r="2.9"/><circle cx="553.5" cy="460.5" r="2.9"/><circle cx="573.5" cy="460.5" r="2.9"/><circle cx="573.5" cy="471.5" r="2.9"/><circle cx="573.5" cy="484.5" r="2.9"/><circle cx="573.5" cy="496.5" r="2.9"/><circle cx="573.5" cy="500.5" r="2.9"/><circle cx="573.5" cy="516.5" r="2.9"/><circle cx="573.5" cy="527.5" r="2.9"/><circle cx="598.5" cy="471.5" r="2.9"/><circle cx="598.5" cy="484.5" r="2.9"/><circle cx="598.5" cy="496.5" r="2.9"/><circle cx="598.5" cy="500.5" r="2.9"/><circle cx="598.5" cy="516.5" r="2.9"/><circle cx="603.5" cy="527.5" r="2.9"/><circle cx="607.5" cy="460.5" r="2.9"/><circle cx="607.5" cy="471.5" r="2.9"/><circle cx="607.5" cy="484.5" r="2.9"/><circle cx="607.5" cy="496.5" r="2.9"/><circle cx="607.5" cy="500.5" r="2.9"/><circle cx="607.5" cy="527.5" r="2.9"/><circle cx="663.5" cy="432.5" r="2.9"/><circle cx="663.5" cy="471.5" r="2.9"/><circle cx="663.5" cy="496.5" r="2.9"/><circle cx="720.5" cy="460.5" r="2.9"/><circle cx="720.5" cy="471.5" r="2.9"/><circle cx="720.5" cy="500.5" r="2.9"/><circle cx="720.5" cy="527.5" r="2.9"/></g></svg>
<div class="a" style="left:10px;top:137px;width:51px;height:84.6px;background:#282828;border-radius:5px;box-shadow:0 0 0 1px #2c2c2c"></div>
<div class="a" style="left:10px;top:178.8px;width:51px;height:1px;background:#383838"></div>
<svg style="left:10px;top:137.0px" width="51" height="42"><g transform="translate(24 20.5) scale(1.27) translate(-25.5 -21)"><rect x="15" y="10" width="21" height="21" fill="none" stroke="#dca84a" stroke-width="1.5" stroke-dasharray="3.6 2.4" stroke-dashoffset="1"/>
<path d="M22 15 L30 21.5 L25.8 21.8 L22 26 Z" fill="#dcdcdc"/></g><path d="M45 38 L49 34 V38Z" fill="#8a8a8a"/></svg>
<svg style="left:10px;top:179.3px" width="51" height="42"><g transform="translate(24 20.5) scale(1.27) translate(-25.5 -21)"><circle cx="25.5" cy="21" r="11" fill="none" stroke="#ffffff" stroke-width="1.6"/>
<circle cx="25.5" cy="21" r="11" fill="none" stroke="#b23a3a" stroke-width="1.7" stroke-dasharray="8.6 8.7" stroke-dashoffset="4"/>
<path d="M25.5 14 V19 M25.5 23 V28 M18.5 21 H23.5 M27.5 21 H32.5" stroke="#9a9a9a" stroke-width="1.6"/></g></svg>
<div class="a" style="left:10px;top:229px;width:51px;height:170.4px;background:#282828;border-radius:5px;box-shadow:0 0 0 1px #2c2c2c"></div>
<div class="a" style="left:10px;top:229.0px;width:51px;height:42.6px;background:#4772b3;border-radius:5px 5px 0 0"></div>
<div class="a" style="left:10px;top:271.1px;width:51px;height:1px;background:#383838"></div>
<div class="a" style="left:10px;top:313.7px;width:51px;height:1px;background:#383838"></div>
<div class="a" style="left:10px;top:356.3px;width:51px;height:1px;background:#383838"></div>
<svg style="left:10px;top:229.0px" width="51" height="42"><g transform="translate(24 20.5) scale(1.27) translate(-25.5 -21)"><g fill="#dcdcdc"><path d="M25.5 8 L21.5 13 H29.5Z"/><path d="M25.5 34 L21.5 29 H29.5Z"/><path d="M12 21 L17 17 V25Z"/><path d="M39 21 L34 17 V25Z"/></g>
<path d="M25.5 14 V17 M25.5 25 V28 M18 21 H21 M30 21 H33" stroke="#dcdcdc" stroke-width="1.8"/></g></svg>
<svg style="left:10px;top:271.6px" width="51" height="42"><g transform="translate(24 20.5) scale(1.27) translate(-25.5 -21)"><path d="M16 18 A10 10 0 0 1 34 16 M35 24 A10 10 0 0 1 17 26" fill="none" stroke="#dcdcdc" stroke-width="1.05"/>
<path d="M12 20 H20 L16 26Z M31 21 H39 L35 15Z" fill="#dcdcdc"/><path d="M25.5 16 L30 21 L25.5 26 L21 21Z" fill="#b0b0b0"/></g></svg>
<svg style="left:10px;top:314.2px" width="51" height="42"><g transform="translate(24 20.5) scale(1.27) translate(-25.5 -21)"><path d="M16.8 19 V13.2 H33.8 V30.3 H26.5" fill="none" stroke="#c8c8c8" stroke-width="1.05"/>
<rect x="16.4" y="21" width="8.7" height="8.9" fill="#dcdcdc"/><path d="M24.5 21.5 L31 15.5 M27.3 15.3 H31.3 V19.3" fill="none" stroke="#dcdcdc" stroke-width="1.1"/></g></svg>
<svg style="left:10px;top:356.8px" width="51" height="42"><g transform="translate(24 20.5) scale(1.27) translate(-25.5 -21)"><g transform="translate(25.5 21) scale(0.76) translate(-25.5 -21)"><circle cx="25.5" cy="21" r="12" fill="none" stroke="#dcdcdc" stroke-width="1.5" stroke-dasharray="7 3.5" stroke-dashoffset="3"/>
<rect x="20.5" y="16" width="10" height="10" fill="#dcdcdc"/><g fill="#dcdcdc"><path d="M25.5 7 L22 11 H29Z M25.5 35 L22 31 H29Z M11.5 21 L15.5 17.5 V24.5Z M39.5 21 L35.5 17.5 V24.5Z"/></g></g></g></svg>
<div class="a" style="left:10px;top:406px;width:51px;height:42.3px;background:#282828;border-radius:5px;box-shadow:0 0 0 1px #2c2c2c"></div>
<svg style="left:10px;top:406.0px" width="51" height="42"><g transform="translate(24 20.5) scale(1.27) translate(-25.5 -21)"><path d="M14 26 L29 11 L33 15 L18 30 L13 31Z" fill="#dcdcdc"/><path d="M14 30 Q21 36 27 28 Q33 21 39 28" fill="none" stroke="#7fd4a8" stroke-width="1.6"/></g><path d="M45 38 L49 34 V38Z" fill="#8a8a8a"/></svg>
<div class="a" style="left:10px;top:455px;width:51px;height:42.3px;background:#282828;border-radius:5px;box-shadow:0 0 0 1px #2c2c2c"></div>
<svg style="left:10px;top:455.0px" width="51" height="42"><g transform="translate(24 20.5) scale(1.27) translate(-25.5 -21)"><path d="M15 17 L21 11 H36 V27 L30 33 H15Z M15 17 H30 V33 M30 17 L36 11" fill="none" stroke="#dcdcdc" stroke-width="1.1"/><path d="M13 22 L26 17" stroke="#c8a0e8" stroke-width="1.1"/><circle cx="13" cy="22" r="2" fill="#c8a0e8"/></g></svg>
<div class="a" style="left:10px;top:504px;width:51px;height:129.0px;background:#282828;border-radius:5px;box-shadow:0 0 0 1px #2c2c2c"></div>
<div class="a" style="left:10px;top:546.5px;width:51px;height:1px;background:#383838"></div>
<div class="a" style="left:10px;top:589.5px;width:51px;height:1px;background:#383838"></div>
<svg style="left:10px;top:504.0px" width="51" height="42"><g transform="translate(24 20.5) scale(1.27) translate(-25.5 -21)"><path d="M18 27 V17 Q18 15 20 15 V12 Q20 10 22 10 Q24 10 24 12 V11 Q24 9 26 9 Q28 9 28 11 V12 Q28 10 30 10 Q32 10 32 12 V14 Q32 13 34 13 Q36 13 36 15 V24 Q36 30 32 32 H22 Q18 31 18 27Z" fill="none" stroke="#dcdcdc" stroke-width="1.1"/></g></svg>
<svg style="left:10px;top:547.0px" width="51" height="42"><g transform="translate(24 20.5) scale(1.27) translate(-25.5 -21)"><path d="M22 32 Q17 29 16 24 L19 23 L22 25 V13 Q22 11 24 11 Q26 11 26 13 V20 L33 21 Q36 22 35 26 L33 32Z" fill="none" stroke="#dcdcdc" stroke-width="1.05"/><path d="M14 16 V13 H17 M30 9 H33 V12" fill="none" stroke="#dcdcdc" stroke-width="1.2"/></g></svg>
<svg style="left:10px;top:590.0px" width="51" height="42"><g transform="translate(24 20.5) scale(1.27) translate(-25.5 -21)"><path d="M22 32 Q17 29 16 24 L19 23 L22 25 V15 Q22 13 24 13 Q26 13 26 15 V20 L33 21 Q36 22 35 26 L33 32Z" fill="none" stroke="#dcdcdc" stroke-width="1.05"/><path d="M13 24 L16 21 M28 10 L30 13" fill="none" stroke="#dcdcdc" stroke-width="1.2"/></g></svg>
<!--UVMESH-->
<div class="a" style="left:749px;top:136px;width:34px;height:34px;border-radius:50%;background:#2a2a2a"></div>
<div class="a" style="left:749px;top:174px;width:34px;height:34px;border-radius:50%;background:#2a2a2a"></div>
<svg style="left:749px;top:136px" width="34" height="34" viewBox="-17 -17 34 34"><circle cx="2" cy="-1" r="8" fill="#e0e0e0"/><path d="M-4 5 L-9 10" stroke="#e0e0e0" stroke-width="3" stroke-linecap="round"/><path d="M2 -5.5 V3.5 M-2.5 -1 H6.5" stroke="#282828" stroke-width="1.3"/></svg>
<svg style="left:749px;top:174px" width="34" height="34" viewBox="-17 -17 34 34"><path d="M-6 5 Q-9 1 -10 -2 Q-9 -4 -7 -2 L-5 0 V-8 Q-5 -10 -3.5 -10 Q-2 -10 -2 -8 V-11 Q-2 -13 0 -13 Q2 -13 2 -11 V-9 Q2 -11 4 -11 Q6 -11 6 -9 V-6 Q6 -8 8 -8 Q10 -8 9.5 -5 L8 5 Q6 10 0 10 Q-4 10 -6 5Z" fill="#e0e0e0"/></svg>
<div class="a" style="left:784px;top:141px;width:10px;height:24px;background:#2c2c2c;border-radius:4px 0 0 4px"></div>
<svg style="left:786px;top:147px" width="8" height="12"><path d="M6 1 L2 6 L6 11" fill="none" stroke="#9a9a9a" stroke-width="1.3"/></svg>
<svg style="left:193px;top:665px" width="60" height="60" viewBox="-30.5 -30 60 60"><path d="M-25 0 H-6 M6 0 H25 M0 -25 V-6 M0 6 V25" stroke="#000" stroke-width="1.6"/><circle r="12.5" fill="none" stroke="#ffffff" stroke-width="2"/><circle r="12.5" fill="none" stroke="#e01010" stroke-width="2" stroke-dasharray="4.9 4.9" stroke-dashoffset="2.4"/></svg>

<!-- RIGHT EDITOR: 3D -->
<div class="a" style="left:797px;top:63px;width:787px;height:717px;background:linear-gradient(#313131,#3d3d3d);border-radius:6px 6px 0 0"></div>
<svg style="left:797px;top:63px" width="787" height="717" viewBox="797 63 787 717"><defs><clipPath id="vp"><rect x="797" y="63" width="787" height="717"/></clipPath></defs><g clip-path="url(#vp)">
<defs><linearGradient id="gf" x1="0" y1="249" x2="0" y2="780" gradientUnits="userSpaceOnUse"><stop offset="0" stop-color="#fff" stop-opacity="0"/><stop offset="0.08" stop-color="#fff" stop-opacity="0.35"/><stop offset="0.22" stop-color="#fff" stop-opacity="0.9"/><stop offset="0.42" stop-color="#fff" stop-opacity="0.8"/><stop offset="0.6" stop-color="#fff" stop-opacity="0"/></linearGradient><mask id="gm" maskUnits="userSpaceOnUse" x="797" y="63" width="787" height="717"><rect x="797" y="63" width="787" height="717" fill="url(#gf)"/></mask></defs>
<g mask="url(#gm)"><path d="M4316.5 1155.5L621.0 249.0M-1917.0 1011.5L1985.0 249.0M4484.8 894.9L621.0 249.0M-2034.5 807.3L1985.0 249.0M4582.1 751.2L621.0 249.0M-2103.2 689.4L1985.0 249.0M4646.8 660.1L621.0 249.0M-2148.7 612.7L1985.0 249.0M4693.1 597.1L621.0 249.0M-2181.1 558.8L1985.0 249.0M4728.1 550.9L621.0 249.0M-2205.5 518.8L1985.0 249.0M4755.5 515.6L621.0 249.0M-2224.5 488.0L1985.0 249.0M4777.6 487.7L621.0 249.0M-2239.7 463.5L1985.0 249.0M4795.8 465.1L621.0 249.0M-2252.2 443.6L1985.0 249.0M4811.0 446.4L621.0 249.0M-2262.6 427.0L1985.0 249.0M4824.0 430.7L621.0 249.0M-2271.4 413.1L1985.0 249.0M4835.1 417.3L621.0 249.0M-2279.0 401.2L1985.0 249.0M4844.8 405.8L621.0 249.0M-2285.6 390.8L1985.0 249.0M4853.3 395.7L621.0 249.0M-2291.4 381.9L1985.0 249.0M4860.9 386.9L621.0 249.0M-2296.5 373.9L1985.0 249.0M4867.6 379.0L621.0 249.0M-2301.0 366.9L1985.0 249.0M4873.6 372.0L621.0 249.0M-2305.1 360.6L1985.0 249.0M4879.1 365.8L621.0 249.0M-2308.7 355.0L1985.0 249.0M4884.0 360.1L621.0 249.0M-2312.0 349.9L1985.0 249.0M4888.5 354.9L621.0 249.0M-2315.0 345.2L1985.0 249.0M4892.6 350.3L621.0 249.0M-2317.8 341.0L1985.0 249.0M4896.4 346.0L621.0 249.0M-2320.3 337.1L1985.0 249.0M4899.9 342.0L621.0 249.0M-2322.7 333.6L1985.0 249.0M4903.1 338.4L621.0 249.0M-2324.8 330.3L1985.0 249.0M4906.1 335.0L621.0 249.0M-2326.8 327.3L1985.0 249.0M4908.8 331.9L621.0 249.0M-2328.6 324.4L1985.0 249.0M4911.4 329.0L621.0 249.0M-2330.4 321.8L1985.0 249.0M4913.8 326.3L621.0 249.0M-2332.0 319.4L1985.0 249.0M4916.1 323.8L621.0 249.0M-2333.5 317.1L1985.0 249.0M4918.2 321.4L621.0 249.0M-2334.9 314.9L1985.0 249.0M4920.2 319.2L621.0 249.0M-2336.2 312.9L1985.0 249.0M4922.1 317.1L621.0 249.0M-2337.5 311.0L1985.0 249.0M4923.8 315.1L621.0 249.0M-2338.7 309.3L1985.0 249.0M4925.5 313.3L621.0 249.0M-2339.8 307.6L1985.0 249.0M4927.1 311.5L621.0 249.0M-2340.8 306.0L1985.0 249.0M4928.6 309.9L621.0 249.0M-2341.8 304.5L1985.0 249.0M4930.0 308.3L621.0 249.0M-2342.8 303.0L1985.0 249.0M4931.4 306.8L621.0 249.0M-2343.7 301.7L1985.0 249.0M4932.7 305.4L621.0 249.0M-2344.5 300.4L1985.0 249.0M4933.9 304.0L621.0 249.0M-2345.3 299.2L1985.0 249.0" stroke="#525252" stroke-width="1" fill="none"/></g>
<path d="M797 641 L1074 548" stroke="#7a2a34" stroke-width="1.6"/><path d="M797 641 L1074 548" stroke="#262626" stroke-width="1.6" stroke-dasharray="1.2 1.8"/>
<path d="M1419 433.5 L1584 380" stroke="#9b3a4a" stroke-width="1.5"/>
<path d="M797 328.7 L984 416.5" stroke="#5f8a2a" stroke-width="1.5"/>
<path d="M1312 566 L1584 686" stroke="#55782a" stroke-width="1.6"/><path d="M1312 566 L1584 686" stroke="#262626" stroke-width="1.6" stroke-dasharray="1.2 1.8"/>
<path d="M1520 780 L1584 671 M797 598 L822 672" stroke="#4e4e4e" stroke-width="1" fill="none"/>
<path d="M1566 678.8 L1584 686.7" stroke="#6fa52a" stroke-width="1.6"/>
<path d="M1185 126 V254 M1188 622 L1193 766" stroke="#151515" stroke-width="1.2"/>
<path d="M1184.4 425.6 L1352.6 281 L1430.8 349 L1403.7 521.5 L1187.5 621.6 Z" fill="#8a6d5b"/>
<path d="M977.2 364.4 L1184.4 425.6 L1187.5 621.6 L997.7 497.1 Z" fill="#c6a594"/>
<path d="M977.2 364.4L997.7 497.1 M988.8 367.8L1008.3 504.1 M1016.6 376.0L1033.8 520.8 M1031.7 380.5L1047.6 529.8 M1050.8 386.1L1065.1 541.3 M1070.4 391.9L1083.1 553.1 M1109.8 403.6L1119.2 576.8 M1116.0 405.4L1124.9 580.5 M1164.7 419.8L1169.5 609.8 M1184.4 425.6L1187.5 621.6 M977.2 364.4L1184.4 425.6 M978.2 371.0L1184.6 435.4 M982.7 400.2L1185.2 478.5 M985.8 420.1L1185.7 507.9 M989.1 441.4L1186.2 539.3 M993.8 471.9L1186.9 584.4 M997.7 497.1L1187.5 621.6 M977.2 364.4L989.8 374.6 M989.8 374.6L982.7 400.2 M982.7 400.2L997.0 425.1 M997.0 425.1L989.1 441.4 M985.8 420.1L994.6 444.1 M989.1 441.4L1004.6 478.2 M1004.6 478.2L997.7 497.1 M1016.6 376.0L989.8 374.6 M989.8 374.6L1021.2 415.1 M989.8 374.6L1007.6 409.9 M1021.2 415.1L997.0 425.1 M997.0 425.1L1026.5 460.0 M1026.5 460.0L1004.6 478.2 M1004.6 478.2L1033.8 520.8 M1004.6 478.2L1021.0 512.4 M1016.6 376.0L1032.5 388.0 M1032.5 388.0L1021.2 415.1 M1021.2 415.1L1038.4 443.2 M1038.4 443.2L1026.5 460.0 M1023.8 436.8L1033.7 463.5 M1026.5 460.0L1044.6 501.5 M1044.6 501.5L1033.8 520.8 M1050.8 386.1L1032.5 388.0 M1032.5 388.0L1054.6 428.0 M1032.5 388.0L1045.3 424.4 M1054.6 428.0L1038.4 443.2 M1038.4 443.2L1059.1 476.1 M1059.1 476.1L1044.6 501.5 M1044.6 501.5L1065.1 541.3 M1044.6 501.5L1056.3 535.6 M1050.8 386.1L1071.1 400.0 M1071.1 400.0L1054.6 428.0 M1054.6 428.0L1075.8 459.6 M1075.8 459.6L1059.1 476.1 M1056.8 451.3L1068.4 480.8 M1059.1 476.1L1080.7 522.5 M1080.7 522.5L1065.1 541.3 M1109.8 403.6L1071.1 400.0 M1071.1 400.0L1112.3 450.3 M1071.1 400.0L1093.1 442.9 M1112.3 450.3L1075.8 459.6 M1075.8 459.6L1115.2 504.0 M1115.2 504.0L1080.7 522.5 M1080.7 522.5L1119.2 576.8 M1080.7 522.5L1101.1 565.0 M1109.8 403.6L1116.5 414.2 M1116.5 414.2L1112.3 450.3 M1112.3 450.3L1119.7 479.0 M1119.7 479.0L1115.2 504.0 M1113.7 476.3L1118.2 505.5 M1115.2 504.0L1123.2 547.2 M1123.2 547.2L1119.2 576.8 M1164.7 419.8L1116.5 414.2 M1116.5 414.2L1166.0 471.1 M1116.5 414.2L1142.2 461.9 M1166.0 471.1L1119.7 479.0 M1119.7 479.0L1167.5 530.0 M1167.5 530.0L1123.2 547.2 M1123.2 547.2L1169.5 609.8 M1123.2 547.2L1147.2 595.1 M1164.7 419.8L1184.6 435.4 M1184.6 435.4L1166.0 471.1 M1166.0 471.1L1185.7 507.9 M1185.7 507.9L1167.5 530.0 M1166.7 499.6L1176.8 534.6 M1167.5 530.0L1186.9 584.4 M1186.9 584.4L1169.5 609.8" stroke="#d17f22" stroke-width="0.8" fill="none" opacity="0.85"/>
<polygon points="990.5,374.4 1018.5,382.5 1020,412.8 993.2,403.8" fill="#1c1c1c" stroke="#3a3a3a" stroke-width="1"/>
<path d="M990.5 374.4 L993.2 403.8 L1020 412.8" fill="none" stroke="#8c8c8c" stroke-width="1.2"/>
<path d="M1004.5 378.45 L1006.6 408.3" stroke="#3c3c3c" stroke-width="1.2"/>
<polygon points="1032.6,388.7 1051.7,396.2 1054.6,427.4 1035.8,419.4" fill="#1c1c1c" stroke="#3a3a3a" stroke-width="1"/>
<path d="M1032.6 388.7 L1035.8 419.4 L1054.6 427.4" fill="none" stroke="#8c8c8c" stroke-width="1.2"/>
<path d="M1042.15 392.45 L1045.1999999999998 423.4" stroke="#3c3c3c" stroke-width="1.2"/>
<polygon points="1070.6,400.2 1110.7,414.6 1112.5,450.6 1073.8,436" fill="#1c1c1c" stroke="#3a3a3a" stroke-width="1"/>
<path d="M1070.6 400.2 L1073.8 436 L1112.5 450.6" fill="none" stroke="#8c8c8c" stroke-width="1.2"/>
<path d="M1090.65 407.4 L1093.15 443.3" stroke="#3c3c3c" stroke-width="1.2"/>
<polygon points="1116.8,416.4 1165.2,430.7 1166.5,473.5 1117.9,455.8" fill="#1c1c1c" stroke="#3a3a3a" stroke-width="1"/>
<path d="M1116.8 416.4 L1117.9 455.8 L1166.5 473.5" fill="none" stroke="#8c8c8c" stroke-width="1.2"/>
<path d="M1141.0 423.54999999999995 L1142.2 464.65" stroke="#3c3c3c" stroke-width="1.2"/>
<polygon points="1001.3,446.9 1015.6,454 1017.4,473.8 1003.9,464.8" fill="#1c1c1c" stroke="#3a3a3a" stroke-width="1"/>
<path d="M1001.3 446.9 L1003.9 464.8 L1017.4 473.8" fill="none" stroke="#8c8c8c" stroke-width="1.2"/>
<path d="M1008.45 450.45 L1010.65 469.3" stroke="#3c3c3c" stroke-width="1.2"/>
<polygon points="1043.2,467.7 1056.2,472 1065.8,540.2 1049.7,529.4" fill="#1c1c1c" stroke="#3a3a3a" stroke-width="1"/>
<path d="M1043.2 467.7 L1049.7 529.4 L1065.8 540.2" fill="none" stroke="#8c8c8c" stroke-width="1.2"/>
<path d="M1049.7 469.85 L1057.75 534.8" stroke="#3c3c3c" stroke-width="1.2"/>
<polygon points="1078.4,486.3 1114.3,502.5 1117.9,543.8 1082,524" fill="#1c1c1c" stroke="#3a3a3a" stroke-width="1"/>
<path d="M1078.4 486.3 L1082 524 L1117.9 543.8" fill="none" stroke="#8c8c8c" stroke-width="1.2"/>
<path d="M1096.35 494.4 L1099.95 533.9" stroke="#3c3c3c" stroke-width="1.2"/>
<polygon points="1123.3,509.7 1166.3,529.4 1168.1,574.3 1125,549.1" fill="#1c1c1c" stroke="#3a3a3a" stroke-width="1"/>
<path d="M1123.3 509.7 L1125 549.1 L1168.1 574.3" fill="none" stroke="#8c8c8c" stroke-width="1.2"/>
<path d="M1144.8 519.55 L1146.55 561.7" stroke="#3c3c3c" stroke-width="1.2"/>
<path d="M1430.8 349L1403.7 521.5 M1403.7 521.5L1187.5 621.6 M1333.3 296.4L1318.6 479.8 M1216.7 398.5L1324.4 402.8 M1324.4 402.8L1424.4 379.2 M1185.2 482.6L1324.4 402.8 M1185.2 482.6L1318.6 479.8 M1318.6 479.8L1413.6 457.5 M1324.4 402.8L1413.6 457.5 M1318.6 479.8L1187.5 621.6 M1318.6 479.8L1403.7 521.5" stroke="#d6841e" stroke-width="0.9" fill="none"/>
<path d="M1184.4 425.6 L1187.5 621.6 L1403.7 521.5 L1430.8 349 M977 364 L998 497 L1188 622" stroke="#e8921f" stroke-width="1.2" fill="none"/>
<path d="M1364 256.7 L1468 350 L1467 358 L1455 362 L1352 281 Z" fill="#4e4f50"/>
<path d="M1364 256.7 L1468 350 L1470 356 L1366 266Z" fill="#6a6b6c"/>
<path d="M1352 281 L1444 360 L1455 362 L1358 276Z" fill="#2e2e2e"/>
<path d="M940.8 347.7 L1076.2 254.1 L1364.1 256.7 L1175.6 418.2 Z" fill="#9d9e9f"/>
<path d="M940.8 347.7 L1175.6 418.2 L1364.1 256.7 L1367.5 264 L1180 429.5 L946 358.5 Z" fill="#3c3c3c"/>
<path d="M940.8 347.7 L1175.6 418.2 L1364.1 256.7 L1365.8 260.5 L1178 424 L943 353 Z" fill="#5e5f60"/>
<g transform="translate(1190 509.7)"><path d="M-20 7 L-5 1.5 M5 -1.5 L19 -7 M-16 -8 L-4 -3 M4 2 L17 8 M0 -24 V-7 M0 6 V23" stroke="#151515" stroke-width="1.1"/><circle r="12.2" fill="none" stroke="#fff" stroke-width="1.5"/><circle r="12.2" fill="none" stroke="#f02020" stroke-width="1.6" stroke-dasharray="3.4 6.2" stroke-dashoffset="1"/><circle r="2.6" fill="#f2a23a"/></g>
</g></svg>
<div class="a" style="left:807px;top:137px;width:51px;height:83.4px;background:#282828;border-radius:5px;box-shadow:0 0 0 1px #2c2c2c"></div>
<div class="a" style="left:807px;top:137.0px;width:51px;height:41.7px;background:#4772b3;border-radius:5px 5px 0 0"></div>
<div class="a" style="left:807px;top:178.2px;width:51px;height:1px;background:#383838"></div>
<svg style="left:807px;top:137.0px" width="51" height="42"><g transform="translate(24 20.5) scale(1.27) translate(-25.5 -21)"><rect x="15" y="10" width="21" height="21" fill="none" stroke="#dca84a" stroke-width="1.5" stroke-dasharray="3.6 2.4" stroke-dashoffset="1"/>
<path d="M22 15 L30 21.5 L25.8 21.8 L22 26 Z" fill="#dcdcdc"/></g><path d="M45 38 L49 34 V38Z" fill="#8a8a8a"/></svg>
<svg style="left:807px;top:178.7px" width="51" height="42"><g transform="translate(24 20.5) scale(1.27) translate(-25.5 -21)"><circle cx="25.5" cy="21" r="11" fill="none" stroke="#ffffff" stroke-width="1.6"/>
<circle cx="25.5" cy="21" r="11" fill="none" stroke="#b23a3a" stroke-width="1.7" stroke-dasharray="8.6 8.7" stroke-dashoffset="4"/>
<path d="M25.5 14 V19 M25.5 23 V28 M18.5 21 H23.5 M27.5 21 H32.5" stroke="#9a9a9a" stroke-width="1.6"/></g></svg>
<div class="a" style="left:807px;top:229px;width:51px;height:170.4px;background:#282828;border-radius:5px;box-shadow:0 0 0 1px #2c2c2c"></div>
<div class="a" style="left:807px;top:271.1px;width:51px;height:1px;background:#383838"></div>
<div class="a" style="left:807px;top:313.7px;width:51px;height:1px;background:#383838"></div>
<div class="a" style="left:807px;top:356.3px;width:51px;height:1px;background:#383838"></div>
<svg style="left:807px;top:229.0px" width="51" height="42"><g transform="translate(24 20.5) scale(1.27) translate(-25.5 -21)"><g fill="#dcdcdc"><path d="M25.5 8 L21.5 13 H29.5Z"/><path d="M25.5 34 L21.5 29 H29.5Z"/><path d="M12 21 L17 17 V25Z"/><path d="M39 21 L34 17 V25Z"/></g>
<path d="M25.5 14 V17 M25.5 25 V28 M18 21 H21 M30 21 H33" stroke="#dcdcdc" stroke-width="1.8"/></g></svg>
<svg style="left:807px;top:271.6px" width="51" height="42"><g transform="translate(24 20.5) scale(1.27) translate(-25.5 -21)"><path d="M16 18 A10 10 0 0 1 34 16 M35 24 A10 10 0 0 1 17 26" fill="none" stroke="#dcdcdc" stroke-width="1.05"/>
<path d="M12 20 H20 L16 26Z M31 21 H39 L35 15Z" fill="#dcdcdc"/><path d="M25.5 16 L30 21 L25.5 26 L21 21Z" fill="#b0b0b0"/></g></svg>
<svg style="left:807px;top:314.2px" width="51" height="42"><g transform="translate(24 20.5) scale(1.27) translate(-25.5 -21)"><path d="M16.8 19 V13.2 H33.8 V30.3 H26.5" fill="none" stroke="#c8c8c8" stroke-width="1.05"/>
<rect x="16.4" y="21" width="8.7" height="8.9" fill="#dcdcdc"/><path d="M24.5 21.5 L31 15.5 M27.3 15.3 H31.3 V19.3" fill="none" stroke="#dcdcdc" stroke-width="1.1"/></g><path d="M45 38 L49 34 V38Z" fill="#8a8a8a"/></svg>
<svg style="left:807px;top:356.8px" width="51" height="42"><g transform="translate(24 20.5) scale(1.27) translate(-25.5 -21)"><g transform="translate(25.5 21) scale(0.76) translate(-25.5 -21)"><circle cx="25.5" cy="21" r="12" fill="none" stroke="#dcdcdc" stroke-width="1.5" stroke-dasharray="7 3.5" stroke-dashoffset="3"/>
<rect x="20.5" y="16" width="10" height="10" fill="#dcdcdc"/><g fill="#dcdcdc"><path d="M25.5 7 L22 11 H29Z M25.5 35 L22 31 H29Z M11.5 21 L15.5 17.5 V24.5Z M39.5 21 L35.5 17.5 V24.5Z"/></g></g></g></svg>
<div class="a" style="left:807px;top:407px;width:51px;height:84.0px;background:#282828;border-radius:5px;box-shadow:0 0 0 1px #2c2c2c"></div>
<div class="a" style="left:807px;top:448.5px;width:51px;height:1px;background:#383838"></div>
<svg style="left:807px;top:407.0px" width="51" height="42"><g transform="translate(24 20.5) scale(1.27) translate(-25.5 -21)"><path d="M14 26 L29 11 L33 15 L18 30 L13 31Z" fill="#dcdcdc"/><path d="M14 30 Q21 36 27 28 Q33 21 39 28" fill="none" stroke="#7fd4a8" stroke-width="1.6"/></g><path d="M45 38 L49 34 V38Z" fill="#8a8a8a"/></svg>
<svg style="left:807px;top:449.0px" width="51" height="42"><g transform="translate(24 20.5) scale(1.27) translate(-25.5 -21)"><path d="M17 9 H20 V33 H17Z M17 30 H39 V33 H17Z" fill="#dcdcdc"/><path d="M20 15 A14 14 0 0 1 34 29 H20Z" fill="#7fd4a8"/></g></svg>
<div class="a" style="left:807px;top:499px;width:51px;height:42.0px;background:#282828;border-radius:5px;box-shadow:0 0 0 1px #2c2c2c"></div>
<svg style="left:807px;top:499.0px" width="51" height="42"><g transform="translate(24 20.5) scale(1.27) translate(-25.5 -21)"><path d="M13 13 H21 M17 9 V17" stroke="#7fd4a8" stroke-width="2"/><path d="M18 19 L23 14 H36 V28 L30 33 H18Z M18 19 H30 V33 M30 19 L36 14" fill="none" stroke="#7fd4a8" stroke-width="1.1"/></g><path d="M45 38 L49 34 V38Z" fill="#8a8a8a"/></svg>
<div class="a" style="left:807px;top:548px;width:51px;height:256.2px;background:#282828;border-radius:5px;box-shadow:0 0 0 1px #2c2c2c"></div>
<div class="a" style="left:807px;top:590.2px;width:51px;height:1px;background:#383838"></div>
<div class="a" style="left:807px;top:632.9px;width:51px;height:1px;background:#383838"></div>
<div class="a" style="left:807px;top:675.6px;width:51px;height:1px;background:#383838"></div>
<div class="a" style="left:807px;top:718.3px;width:51px;height:1px;background:#383838"></div>
<div class="a" style="left:807px;top:761.0px;width:51px;height:1px;background:#383838"></div>
<svg style="left:807px;top:548.0px" width="51" height="42"><g transform="translate(24 20.5) scale(1.27) translate(-25.5 -21)"><path d="M15 16 L20 10 H36 V15 L30 21 H15Z" fill="#7fd4a8"/><path d="M15 21 V33 H30 L36 27 V15 M30 21 V33" fill="none" stroke="#dcdcdc" stroke-width="1.1"/></g><path d="M45 38 L49 34 V38Z" fill="#8a8a8a"/></svg>
<svg style="left:807px;top:590.7px" width="51" height="42"><g transform="translate(24 20.5) scale(1.27) translate(-25.5 -21)"><path d="M15 17 H30 V33 H15Z" fill="#7fd4a8"/><rect x="19" y="21" width="7" height="8" fill="#282828"/><path d="M15 17 L21 11 H36 V27 L30 33 M30 17 L36 11" fill="none" stroke="#dcdcdc" stroke-width="1.1"/><path d="M15 17 H30 V33 H15Z" fill="none" stroke="#dcdcdc" stroke-width="1.2"/></g></svg>
<svg style="left:807px;top:633.4px" width="51" height="42"><g transform="translate(24 20.5) scale(1.27) translate(-25.5 -21)"><path d="M15 21 L20 14 H30 L36 16 L30 21Z" fill="#7fd4a8"/><path d="M15 21 V33 H30 L36 27 V16 M30 21 V33" fill="none" stroke="#dcdcdc" stroke-width="1.1"/></g></svg>
<svg style="left:807px;top:676.1px" width="51" height="42"><g transform="translate(24 20.5) scale(1.27) translate(-25.5 -21)"><path d="M15 17 L21 11 H36 V27 L30 33 H15Z M15 17 H30 V33 M30 17 L36 11" fill="none" stroke="#dcdcdc" stroke-width="1.1"/><path d="M21 32 V17 L27 11" fill="none" stroke="#7fd4a8" stroke-width="1.6"/></g><path d="M45 38 L49 34 V38Z" fill="#8a8a8a"/></svg>
<svg style="left:807px;top:718.8px" width="51" height="42"><g transform="translate(24 20.5) scale(1.27) translate(-25.5 -21)"><path d="M15 17 L21 11 H36 V27 L30 33 H15Z M15 17 H30 V33 M30 17 L36 11" fill="none" stroke="#dcdcdc" stroke-width="1.1"/><path d="M28 10 L20 16 L27 33" fill="none" stroke="#7fd4a8" stroke-width="1.4"/><circle cx="28" cy="10" r="2.5" fill="#7fd4a8"/><circle cx="20" cy="16" r="2.3" fill="#7fd4a8"/><circle cx="27" cy="33" r="2.3" fill="#7fd4a8"/></g><path d="M45 38 L49 34 V38Z" fill="#8a8a8a"/></svg>
<svg style="left:807px;top:761.5px" width="51" height="42"><g transform="translate(24 20.5) scale(1.27) translate(-25.5 -21)"><path d="M15 20 L22 10 L33 14 L36 26 L16 30Z" fill="#7fd4a8"/><circle cx="22" cy="8" r="3" fill="#dcdcdc"/><circle cx="34" cy="14" r="3" fill="#dcdcdc"/></g></svg>
<div class="a" style="left:797px;top:63px;width:787px;height:31px;background:#303030;border-radius:6px 6px 0 0"></div>
<div class="a" style="left:797px;top:94px;width:787px;height:32px;background:rgba(48,48,48,0.93)"></div>
<div class="t" style="left:880px;top:140px;font-size:14.4px">User Perspective</div>
<div class="t" style="left:880px;top:163px;font-size:14.4px">(6) Material.001</div>
<svg style="left:1470px;top:130px" width="110" height="110" viewBox="1470 130 110 110">
<path d="M1522 187.5 L1521.5 152.3" stroke="#2f7de0" stroke-width="2.5"/>
<path d="M1522 187.5 L1547 200.8" stroke="#6fb31d" stroke-width="2.5"/>
<path d="M1522 187.5 L1491.4 199" stroke="#d9304a" stroke-width="2.5"/>
<circle cx="1552.4" cy="176.4" r="9.5" fill="#5a3438" stroke="#c13447" stroke-width="1.5"/>
<circle cx="1496.4" cy="174.6" r="9.5" fill="#3f4a2c" stroke="#5f8a2a" stroke-width="1.5"/>
<circle cx="1521.9" cy="224.2" r="9.5" fill="#2e3d52" stroke="#2f6ec0" stroke-width="1.5"/>
<circle cx="1521.5" cy="152.3" r="10" fill="#3a8ae8"/>
<circle cx="1547" cy="200.8" r="10" fill="#7ed321"/>
<circle cx="1491.4" cy="199" r="10" fill="#ee3556"/>
<text x="1521.5" y="157.5" font-size="14" font-family="Liberation Sans" text-anchor="middle" fill="#111">Z</text>
<text x="1547" y="206" font-size="14" font-family="Liberation Sans" text-anchor="middle" fill="#111">Y</text>
<text x="1491.4" y="204.2" font-size="14" font-family="Liberation Sans" text-anchor="middle" fill="#111">X</text>
</svg>
<div class="a" style="left:1539px;top:239.5px;width:34px;height:34px;border-radius:50%;background:rgba(40,40,40,0.85)"></div>
<svg style="left:1539.0px;top:239.5px" width="34" height="34" viewBox="-17 -17 34 34"><circle cx="2" cy="-1" r="8" fill="#e0e0e0"/><path d="M-4 5 L-9 10" stroke="#e0e0e0" stroke-width="3" stroke-linecap="round"/><path d="M2 -5.5 V3.5 M-2.5 -1 H6.5" stroke="#282828" stroke-width="1.3"/></svg>
<div class="a" style="left:1539px;top:277.2px;width:34px;height:34px;border-radius:50%;background:rgba(40,40,40,0.85)"></div>
<svg style="left:1539.0px;top:277.2px" width="34" height="34" viewBox="-17 -17 34 34"><path d="M-6 5 Q-9 1 -10 -2 Q-9 -4 -7 -2 L-5 0 V-8 Q-5 -10 -3.5 -10 Q-2 -10 -2 -8 V-11 Q-2 -13 0 -13 Q2 -13 2 -11 V-9 Q2 -11 4 -11 Q6 -11 6 -9 V-6 Q6 -8 8 -8 Q10 -8 9.5 -5 L8 5 Q6 10 0 10 Q-4 10 -6 5Z" fill="#e0e0e0"/></svg>
<div class="a" style="left:1539px;top:315.0px;width:34px;height:34px;border-radius:50%;background:rgba(40,40,40,0.85)"></div>
<svg style="left:1539.0px;top:315.0px" width="34" height="34" viewBox="-17 -17 34 34"><circle cx="-4" cy="-6" r="3.8" fill="#e0e0e0"/><circle cx="3" cy="-6" r="3.8" fill="#e0e0e0"/><rect x="-8" y="-2" width="12" height="9" fill="#e0e0e0"/><path d="M4 2 L10 -2 V8 L4 5Z" fill="#e0e0e0"/></svg>
<div class="a" style="left:1539px;top:352.6px;width:34px;height:34px;border-radius:50%;background:rgba(40,40,40,0.85)"></div>
<svg style="left:1539.0px;top:352.6px" width="34" height="34" viewBox="-17 -17 34 34"><path d="M-7 -8 H7 L10 8 H-10Z M-3 -8 L-4 8 M3 -8 L4 8 M-8.5 -3 H8.5 M-9.2 2.5 H9.2" fill="none" stroke="#e0e0e0" stroke-width="1.6"/></svg>
<div class="a" style="left:1571px;top:141px;width:13px;height:24px;background:#2f2f2f;border-radius:4px 0 0 4px"></div><svg style="left:1574px;top:147px" width="8" height="12"><path d="M6 1 L2 6 L6 11" fill="none" stroke="#9a9a9a" stroke-width="1.3"/></svg>
<!--VIEWPORT-->
<!-- right header row1 -->
<div class="dd" style="left:808px;top:66px;width:39px;height:25px"></div>
<svg style="left:812px;top:69px" width="22" height="20"><g fill="none" stroke="#e6e6e6" stroke-width="1.3"><path d="M1 11.5 H10 M1 16.5 H19 M4.5 18 L7 8 M12 18 L13 13"/></g><circle cx="13" cy="6.5" r="4.6" fill="#e6e6e6"/><path d="M10.5 6 Q11 3.5 13.5 3.3" stroke="#555" stroke-width="1" fill="none"/></svg>
<svg style="left:835px;top:77px" width="9" height="6"><path d="M1 1 L4.5 4.5 L8 1" fill="none" stroke="#d8d8d8" stroke-width="1.3"/></svg>
<div class="dd" style="left:854px;top:66px;width:135px;height:25px"></div>
<svg style="left:859px;top:69px" width="20" height="19"><g fill="none" stroke="#c4c4c4" stroke-width="1.2"><rect x="2.5" y="2.5" width="3" height="3"/><rect x="2.5" y="14.5" width="3" height="3"/><rect x="13.5" y="14.5" width="3" height="3"/><path d="M4 6 V14 M6 16 H13 M15 8 V14 M6 4 H10"/></g><rect x="12" y="1" width="6" height="6" fill="#e6e6e6"/></svg>
<div class="t" style="left:887px;top:72px">Edit Mode</div>
<svg style="left:977px;top:77px" width="9" height="6"><path d="M1 1 L4.5 4.5 L8 1" fill="none" stroke="#d8d8d8" stroke-width="1.3"/></svg>
<div class="a" style="left:997px;top:67px;width:71px;height:23px;border-radius:4px;overflow:hidden;background:#545454">
 <div class="a" style="left:47.6px;top:0;width:24px;height:23px;background:#4772b3"></div>
 <div class="a" style="left:23px;top:0;width:1px;height:23px;background:#474747"></div>
</div>
<svg style="left:997px;top:67px" width="72" height="23">
 <path d="M4.5 5 V9 M5.5 4.5 H22.5 V15 L17 18.5 H5.5 V12" fill="none" stroke="#c0c0c0" stroke-width="1"/><path d="M2 8.5 H6.5 V13 H2Z" fill="#cfcfcf"/>
 <path d="M27.5 18.5 V8 L31 4.5 H44.5 V15 L41 18.5" fill="none" stroke="#c0c0c0" stroke-width="1"/><rect x="35" y="9" width="4" height="11" fill="#cfcfcf"/>
 <path d="M52.5 9 V6.5 L55 4.5 H68.5 V14 L66 17" fill="none" stroke="#d8e4f4" stroke-width="1.2"/><rect x="49" y="8" width="12" height="12" fill="#ffffff"/>
</svg>
<div class="t" style="left:1084px;top:72px">View</div>
<div class="t" style="left:1134px;top:72px">Select</div>
<div class="t" style="left:1192px;top:72px">Add</div>
<div class="t" style="left:1236px;top:72px">Mesh</div>
<div class="t" style="left:1289px;top:72px">Vertex</div>
<div class="t" style="left:1350px;top:72px">Edge</div>
<div class="t" style="left:1401px;top:72px">Face</div>
<div class="t" style="left:1449px;top:72px">UV</div>
<div class="dd" style="left:1498px;top:66px;width:100px;height:25px"></div>
<svg style="left:1502px;top:68px" width="20" height="21"><g fill="none" stroke="#e6e6e6" stroke-width="1.2"><path d="M4 2 V16 M1.5 4.5 L4 2 L6.5 4.5 M5 15 L12 8 M9 8 H12.5 V11.5 M5.5 17 H17 M14.5 14.5 L17 17 L14.5 19.5"/><circle cx="4" cy="17" r="1.8"/></g></svg>
<div class="t" style="left:1531px;top:72px">Global</div>
<!-- right row2 -->
<div class="a" style="left:851px;top:100px;width:119px;height:23px;border-radius:4px;overflow:hidden;background:#545454">
 <div class="a" style="left:95.6px;top:0;width:24px;height:23px;background:#4772b3"></div>
 <div class="a" style="left:23.4px;top:0;width:1px;height:23px;background:#474747"></div>
 <div class="a" style="left:47.4px;top:0;width:1px;height:23px;background:#474747"></div>
 <div class="a" style="left:71.4px;top:0;width:1px;height:23px;background:#474747"></div>
</div>
<svg style="left:851px;top:100px" width="120" height="23">
 <rect x="4.5" y="3.5" width="15" height="16" fill="none" stroke="#e6e6e6" stroke-width="1.3" stroke-dasharray="2.2 2.2"/>
 <path d="M31.5 19.5 H40.5 V15.5 H45.5 V3.5 H35.5 V8.5 H31.5Z" fill="#c8c8c8"/>
 <path d="M69 3.5 H59.5 V8.5 H64 V19.5 H69Z" fill="#c8c8c8"/><rect x="54.5" y="10" width="11" height="9.5" fill="none" stroke="#e6e6e6" stroke-width="1.2" stroke-dasharray="2 2"/>
 <path d="M86 3.5 H93.5 V15.5 H81.5 V19.5 H75.5 V8.5 H86Z M81 9 V15 H86 V9Z" fill="#c8c8c8"/>
 <rect x="99.5" y="3.5" width="16" height="16" fill="none" stroke="#ffffff" stroke-width="1.4" stroke-dasharray="2.2 2.4"/><rect x="103.5" y="8" width="7" height="7" fill="#ffffff"/>
</svg>
<svg style="left:1368px;top:102px" width="20" height="18"><path d="M10 1 V17" stroke="#e6e6e6" stroke-width="1.4" stroke-dasharray="2 1.4"/><g fill="none" stroke="#d0d0d0" stroke-width="1.1"><path d="M8 4 Q4 0 2 3 Q1 6 5 9 Q1 11 2 14 Q4 17 8 14 M12 4 Q16 0 18 3 Q19 6 15 9 Q19 11 18 14 Q16 17 12 14"/></g></svg>
<div class="a" style="left:1392px;top:100px;width:63px;height:23px;border-radius:4px;overflow:hidden;background:#545454">
 <div class="a" style="left:20px;top:0;width:1px;height:23px;background:#474747"></div>
 <div class="a" style="left:41px;top:0;width:1px;height:23px;background:#474747"></div>
</div>
<div class="t" style="left:1397px;top:105px;width:12px;text-align:center">X</div>
<div class="t" style="left:1416px;top:105px;width:12px;text-align:center">Y</div>
<div class="t" style="left:1438px;top:105px;width:12px;text-align:center">Z</div>
<div class="tg" style="left:1463px;top:100px;width:23px;height:23px"></div>
<svg style="left:1464px;top:101px" width="22" height="22"><g fill="none" stroke="#c8c8c8" stroke-width="1.1"><rect x="14.5" y="3.5" width="3" height="3"/><rect x="3.5" y="15.5" width="3" height="3"/></g><path d="M6 13 Q6 7 13 5" fill="none" stroke="#8a8a8a" stroke-width="1.3" stroke-dasharray="2 2"/><path d="M16 9 Q16 15 9 17" fill="none" stroke="#8a8a8a" stroke-width="1.3" stroke-dasharray="2 2"/><rect x="14" y="3" width="4" height="4" fill="none" stroke="#d8d8d8" stroke-width="1.2"/><rect x="3" y="15" width="4" height="4" fill="none" stroke="#d8d8d8" stroke-width="1.2"/></svg>
<div class="dd" style="left:1494px;top:100px;width:79px;height:24px"></div>
<div class="t" style="left:1503px;top:105px">Options</div>
<svg style="left:1561px;top:110px" width="9" height="6"><path d="M1 1 L4.5 4.5 L8 1" fill="none" stroke="#d8d8d8" stroke-width="1.3"/></svg>

<div class="a" style="left:1584px;top:63px;width:9px;height:717px;background:#1b1b1b"></div>
<div class="a" style="left:1587.5px;top:63px;width:10px;height:160px;background:#2b2b2b;border-radius:6px 0 0 6px"></div>
<div class="a" style="left:1587.5px;top:229px;width:10px;height:551px;background:#1f1f1f;border-radius:6px 0 0 0;overflow:hidden"><div class="a" style="left:0;top:0;width:10px;height:31px;background:#2b2b2b"></div></div>
<div class="a" style="left:1588px;top:758px;width:10px;height:22px;background:#2b2b2b;border-radius:3px 0 0 0"></div>
</body></html>
